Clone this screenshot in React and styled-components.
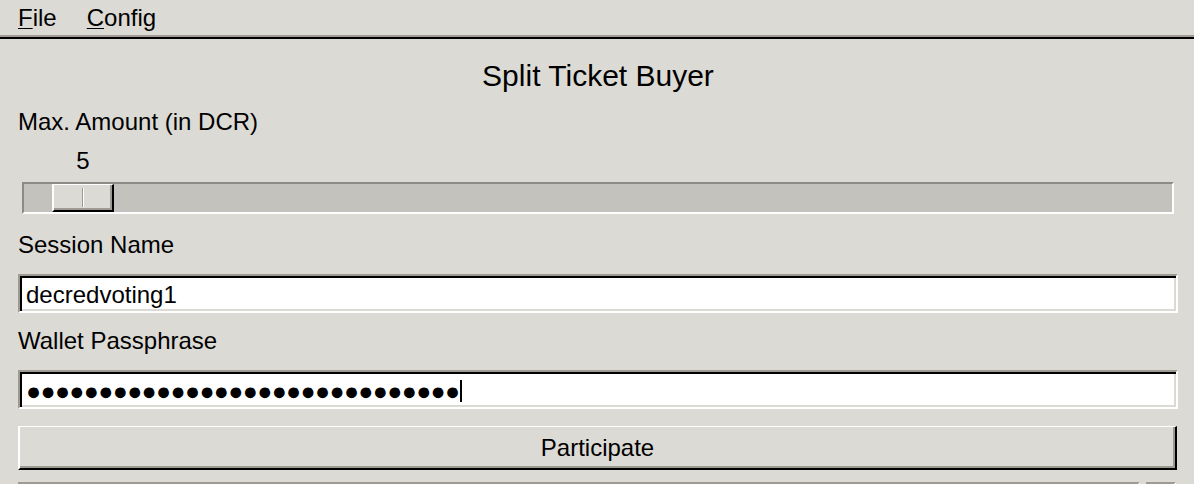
import React from 'react'
import styled, { createGlobalStyle } from 'styled-components'

const GlobalStyle = createGlobalStyle`
html, body {
  margin: 0;
  padding: 0;
  overflow: hidden;
  background: #dcdad5;
  font-family: "Liberation Sans", Arial, sans-serif;
  color: #000;
}
`

const Window = styled.div`
display: flex;
flex-direction: column;
width: 1194px;
height: 484px;
overflow: hidden;
background: #dcdad5;
& > * {
  flex-shrink: 0;
}
`

const MenuBar = styled.div`
display: flex;
gap: 30px;
height: 35px;
padding-left: 18px;
border-bottom: 2px solid #a09c95;
`

const MenuItem = styled.span`
font-size: 24px;
line-height: 28px;
padding-top: 4px;
u {
  text-decoration-thickness: 1px;
  text-underline-offset: 2px;
}
`

const MenuRule = styled.div`
height: 2px;
background: #000;
`

const Content = styled.div`
display: flex;
flex-direction: column;
padding: 0 16px 0 18px;
& > * {
  flex-shrink: 0;
}
`

const Title = styled.h1`
margin: 20px 0 0;
font-size: 30px;
font-weight: normal;
line-height: 34px;
text-align: center;
`

const Label = styled.div`
margin-top: ${(p) => p.top}px;
font-size: 24px;
line-height: 28px;
`

const ValueRow = styled.div`
display: flex;
margin-top: 11px;
height: 28px;
`

const ValueSlot = styled.span`
width: 62px;
font-size: 24px;
line-height: 28px;
text-align: center;
`

const Trough = styled.div`
position: relative;
height: 32px;
margin: 7px 4px 0;
box-sizing: border-box;
border: 2px solid;
border-color: #8d8b86 #fff #fff #8d8b86;
background: #c4c2bd;
`

const Thumb = styled.div`
position: absolute;
top: 0;
width: 62px;
height: 28px;
box-sizing: border-box;
border-style: solid;
border-width: 1px 2px 2px 2px;
border-color: #fff #000 #000 #fff;
box-shadow: inset -2px -2px 0 #9e9a91;
background: #dcdad5;
&::after {
  content: '';
  position: absolute;
  left: 28px;
  top: 3px;
  width: 1px;
  height: 19px;
  background: #9e9a91;
  box-shadow: 1px 0 0 #fff;
}
`

const Entry = styled.div`
display: flex;
align-items: center;
margin-top: 15px;
height: 39px;
box-sizing: border-box;
padding: 2px 6px 0;
border: 2px solid;
border-color: #9e9a91 #fff #fff #9e9a91;
box-shadow: inset 2px 2px 0 #000, inset -2px -2px 0 #dcdad5;
background: #fff;
font-size: 24px;
line-height: 28px;
`

const Dots = styled.span`
font-family: "Liberation Sans", "DejaVu Sans", sans-serif;
font-size: 25px;
letter-spacing: -0.65px;
line-height: 28px;
`

const Caret = styled.span`
display: inline-block;
width: 2px;
height: 22px;
margin-left: 0;
background: #000;
`

const Button = styled.button`
margin: 17px 1px 0 0;
height: 44px;
box-sizing: border-box;
padding: 0;
border-style: solid;
border-width: 1px 2px 2px 2px;
border-color: #fff #000 #000 #fff;
box-shadow: inset -2px -2px 0 #9e9a91;
background: #dcdad5;
font-family: "Liberation Sans", Arial, sans-serif;
font-size: 24px;
line-height: 28px;
color: #000;
`

const BottomRow = styled.div`
display: flex;
gap: 6px;
margin: 12px 2px 0 0;
`

const Sunken = styled.div`
flex: ${(p) => (p.grow ? 1 : '0 0 30px')};
height: 60px;
box-sizing: border-box;
border: 2px solid;
border-color: #9e9a91 #fff #fff #9e9a91;
background: #dcdad5;
`

const SCALE_MIN = 1
const SCALE_MAX = 156
const TRACK = 1148 - 62

const App = () => {
  const amount = 5
  const offset = Math.round(((amount - SCALE_MIN) / (SCALE_MAX - SCALE_MIN)) * TRACK)

  return (
    <Window>
      <GlobalStyle />
      <MenuBar>
        <MenuItem><u>F</u>ile</MenuItem>
        <MenuItem><u>C</u>onfig</MenuItem>
      </MenuBar>
      <MenuRule />
      <Content>
        <Title>Split Ticket Buyer</Title>
        <Label top={15}>Max. Amount (in DCR)</Label>
        <ValueRow>
          <ValueSlot style={{ marginLeft: offset + 6 }}>{amount}</ValueSlot>
        </ValueRow>
        <Trough>
          <Thumb style={{ left: offset }} />
        </Trough>
        <Label top={17}>Session Name</Label>
        <Entry>decredvoting1</Entry>
        <Label top={14}>Wallet Passphrase</Label>
        <Entry>
          <Dots>{'●'.repeat(30)}</Dots>
          <Caret />
        </Entry>
        <Button>Participate</Button>
        <BottomRow>
          <Sunken grow />
          <Sunken />
        </BottomRow>
      </Content>
    </Window>
  )
}

export default App
